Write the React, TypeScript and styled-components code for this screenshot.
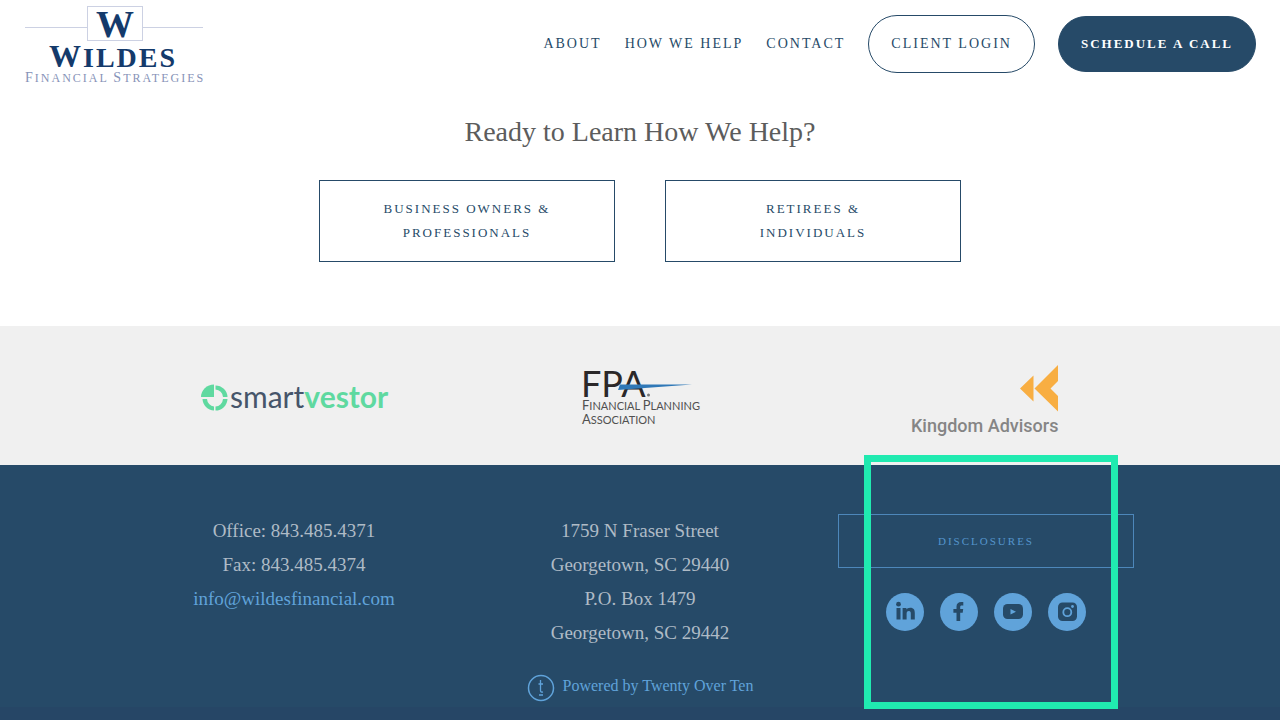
import React from "react";
import styled, { createGlobalStyle, css } from "styled-components";

const navy = "#264a68";
const sky = "#60a3da";
const serif = '"Liberation Serif", "Times New Roman", serif';

const GlobalStyle = createGlobalStyle`
  * { box-sizing: border-box; }
  body { margin: 0; background: #fff; font-family: ${serif}; color: #5c5c5c; }
  a { text-decoration: none; color: inherit; }
  svg { display: block; }
`;

const Header = styled.header`
  display: flex;
  align-items: flex-start;
  justify-content: space-between;
  padding: 0 24px;
`;

const Nav = styled.nav`
  display: flex;
  align-items: center;
  gap: 23px;
  padding-top: 15px;
`;

const NavLink = styled.a<{ $shape?: "outline" | "solid" }>`
  color: ${navy};
  font-size: 14px;
  line-height: 20px;
  letter-spacing: 2px;
  text-transform: uppercase;
  white-space: nowrap;
  ${(p) =>
    p.$shape &&
    css`
      padding: 18px 22px;
      border: 1px solid ${navy};
      border-radius: 29px;
    `}
  ${(p) =>
    p.$shape === "solid" &&
    css`
      padding: 17px 22px;
      background: ${navy};
      color: #fff;
      font-size: 13px;
      font-weight: bold;
    `}
`;

const Cta = styled.section`
  padding: 27px 24px 64px;
`;

const Title = styled.h2`
  margin: 0 0 30px;
  font-size: 28px;
  line-height: 36px;
  font-weight: normal;
  text-align: center;
`;

const Choices = styled.div`
  display: grid;
  grid-template-columns: 1fr 1fr;
  gap: 50px;
  max-width: 642px;
  margin: 0 auto;
`;

const BoxLink = styled.a<{ $light?: boolean }>`
  display: block;
  padding: ${(p) => (p.$light ? "15px" : "16px 56px")};
  border: 1px solid ${(p) => (p.$light ? "#4d87ba" : navy)};
  color: ${(p) => (p.$light ? "#5595cc" : navy)};
  font-size: ${(p) => (p.$light ? "11px" : "13px")};
  line-height: ${(p) => (p.$light ? "22px" : "24px")};
  letter-spacing: 2px;
  text-align: center;
  text-transform: uppercase;
`;

const Partners = styled.section`
  padding: 34px 24px 26px;
  background: #f0f0f0;
`;

const Columns = styled.div<{ $center?: boolean }>`
  display: grid;
  grid-template-columns: repeat(3, 1fr);
  gap: 50px;
  max-width: 988px;
  margin: 0 auto;
  align-items: start;
  justify-items: ${(p) => (p.$center ? "center" : "stretch")};
`;

const Footer = styled.footer`
  padding: 49px 24px 5px;
  background: ${navy};
  border-bottom: 13px solid #264666;
`;

const Lines = styled.address`
  color: #afbbc6;
  font-style: normal;
  font-size: 19px;
  line-height: 34px;
  text-align: center;
`;

const Line = styled.div``;

const MailLink = styled.a`
  color: ${sky};
`;

const SocialColumn = styled.div`
  position: relative;
`;

const SocialRow = styled.div`
  display: flex;
  justify-content: center;
  gap: 16px;
  padding-top: 25px;
`;

const Spotlight = styled.div`
  position: absolute;
  top: -59px;
  left: 26px;
  width: 254px;
  height: 254px;
  border: 7px solid #20eab0;
  pointer-events: none;
`;

const Credit = styled.a`
  display: flex;
  align-items: flex-start;
  justify-content: center;
  gap: 8px;
  margin-top: 24px;
  color: ${sky};
  font-size: 16px;
  line-height: 24px;
`;

const WildesLogo = () => (
  <svg width="180" height="87" viewBox="24 0 180 87" role="img" aria-label="Wildes Financial Strategies">
    <g stroke="#ccd1e3" fill="none">
      <path d="M25 27.5H87M143 27.5H203" />
      <rect x="87.500" y="6.500" width="55" height="34" />
    </g>
    <g fill="#143a6b" fontFamily={serif} fontWeight="bold">
      <text x="115" y="37" fontSize="38" textAnchor="middle">W</text>
      <text x="49" y="67" fontSize="32" letterSpacing="2">W<tspan fontSize="28">ILDES</tspan></text>
    </g>
    <text x="25" y="82" fill="#8793b8" fontFamily={serif} fontSize="14" letterSpacing="2">
      F<tspan fontSize="12">INANCIAL </tspan>S<tspan fontSize="12">TRATEGIES</tspan>
    </text>
  </svg>
);

const SmartvestorLogo = () => (
  <svg width="190" height="79" viewBox="199 360 190 79" role="img" aria-label="smartvestor">
    <g fill="#5fd9a0">
      <path d="M214 384.500V397H201a13 12.500 0 0 1 13-12.500z" />
      <path d="M215.500 385.500a12 12 0 0 1 12 11.500H223a8 8 0 0 0-7.500-7.500zM227.500 399a12 12 0 0 1-12 11.500V406.500a8 8 0 0 0 7.500-7.500zM214 410.500A12 12 0 0 1 202.500 399H207a8 8 0 0 0 7 7.500z" />
    </g>
    <text x="230" y="408" fontFamily="Lato, sans-serif" fontSize="30" fill="#46556a">
      smart<tspan fill="#5fd9a0" fontWeight="bold">vestor</tspan>
    </text>
  </svg>
);

const FpaLogo = () => (
  <svg width="124" height="79" viewBox="578 360 124 79" role="img" aria-label="FPA Financial Planning Association">
    <g fill="#2b2829" fontFamily="Lato, sans-serif">
      <text x="581" y="397" fontSize="36">FPA</text>
      <circle cx="648.500" cy="395" r="1.500" fill="#777" />
      <g fill="#505050" fontSize="13">
        <text x="582" y="410">F<tspan fontSize="11">INANCIAL </tspan>P<tspan fontSize="11">LANNING</tspan></text>
        <text x="582" y="424">A<tspan fontSize="11">SSOCIATION</tspan></text>
      </g>
    </g>
    <path d="M620 384.500L692 384.500L618 390z" fill="#2f78b7" />
  </svg>
);

const KingdomLogo = () => (
  <svg width="152" height="79" viewBox="910 360 152 79" role="img" aria-label="Kingdom Advisors">
    <path d="M1020 388.500L1033.500 375.500V401.500zM1034.500 388.500L1058 365V381L1050.500 388.500L1058 396V411.500z" fill="#f8ae42" />
    <text x="911" y="432" fontFamily="Roboto, sans-serif" fontWeight="500" fontSize="18" fill="#858585">Kingdom Advisors</text>
  </svg>
);

const TwentyMark = () => (
  <svg width="28" height="28" viewBox="0 0 28 28" aria-hidden="true" fill="none" stroke={sky}>
    <circle cx="14" cy="14" r="12.500" strokeWidth="1.500" />
    <path d="M13.500 6V16.500q0 2 2.500 1.500M11.500 10H16M12 21H16" strokeWidth="1.300" />
  </svg>
);

const glyphs: Record<string, React.ReactNode> = {
  LinkedIn: (
    <g fill={navy}>
      <circle cx="12.500" cy="11.200" r="2.400" />
      <path d="M10.500 15h4V26.500h-4zM16.600 15h3.800v1.600c.7-1.200 2-1.900 3.800-1.900 3.700 0 4.600 2.300 4.600 5.400V26.500h-4v-5.500c0-1.500-.1-2.900-1.900-2.900s-2.300 1.300-2.300 2.900V26.500h-4z" />
    </g>
  ),
  Facebook: (
    <path fill={navy} d="M16.500 28v-8.300H13.400v-3.600h3.100v-2.500c0-3.200 1.900-4.700 4.700-4.700.9 0 1.700.1 2.100.2v3.300h-1.500c-1.300 0-1.600.7-1.600 1.600v2.100h3l-.5 3.600h-2.500V28z" />
  ),
  YouTube: (
    <>
      <rect x="9" y="11" width="20" height="15" rx="4.500" fill={navy} />
      <path d="M16.500 16v5.500l5.500-2.700z" fill={sky} />
    </>
  ),
  Instagram: (
    <>
      <rect x="10" y="9.500" width="19" height="18.500" rx="4.500" fill={navy} />
      <circle cx="19.300" cy="19.200" r="4" fill="none" stroke={sky} strokeWidth="1.800" />
      <circle cx="24.500" cy="13.500" r="1.400" fill={sky} />
    </>
  ),
};

const App = () => (
  <>
    <GlobalStyle />
    <Header>
      <a href="#home"><WildesLogo /></a>
      <Nav>
        <NavLink href="#about">About</NavLink>
        <NavLink href="#help">How We Help</NavLink>
        <NavLink href="#contact">Contact</NavLink>
        <NavLink href="#login" $shape="outline">Client Login</NavLink>
        <NavLink href="#schedule" $shape="solid">Schedule a Call</NavLink>
      </Nav>
    </Header>
    <Cta>
      <Title>Ready to Learn How We Help?</Title>
      <Choices>
        <BoxLink href="#owners">Business Owners &amp; Professionals</BoxLink>
        <BoxLink href="#retirees">Retirees &amp;<br />Individuals</BoxLink>
      </Choices>
    </Cta>
    <Partners>
      <Columns $center>
        <SmartvestorLogo />
        <FpaLogo />
        <KingdomLogo />
      </Columns>
    </Partners>
    <Footer>
      <Columns>
        <Lines>
          <Line>Office: 843.485.4371</Line>
          <Line>Fax: 843.485.4374</Line>
          <MailLink href="mailto:info@wildesfinancial.com">info@wildesfinancial.com</MailLink>
        </Lines>
        <Lines>
          <Line>1759 N Fraser Street</Line>
          <Line>Georgetown, SC 29440</Line>
          <Line>P.O. Box 1479</Line>
          <Line>Georgetown, SC 29442</Line>
        </Lines>
        <SocialColumn>
          <BoxLink href="#disclosures" $light>Disclosures</BoxLink>
          <SocialRow>
            {Object.keys(glyphs).map((name) => (
              <a key={name} href={"#" + name.toLowerCase()} aria-label={name}>
                <svg width="38" height="38" viewBox="0 0 38 38" aria-hidden="true">
                  <circle cx="19" cy="19" r="19" fill={sky} />
                  {glyphs[name]}
                </svg>
              </a>
            ))}
          </SocialRow>
          <Spotlight />
        </SocialColumn>
      </Columns>
      <Credit href="#credit">
        <TwentyMark />
        Powered by Twenty Over Ten
      </Credit>
    </Footer>
  </>
);

export default App;
